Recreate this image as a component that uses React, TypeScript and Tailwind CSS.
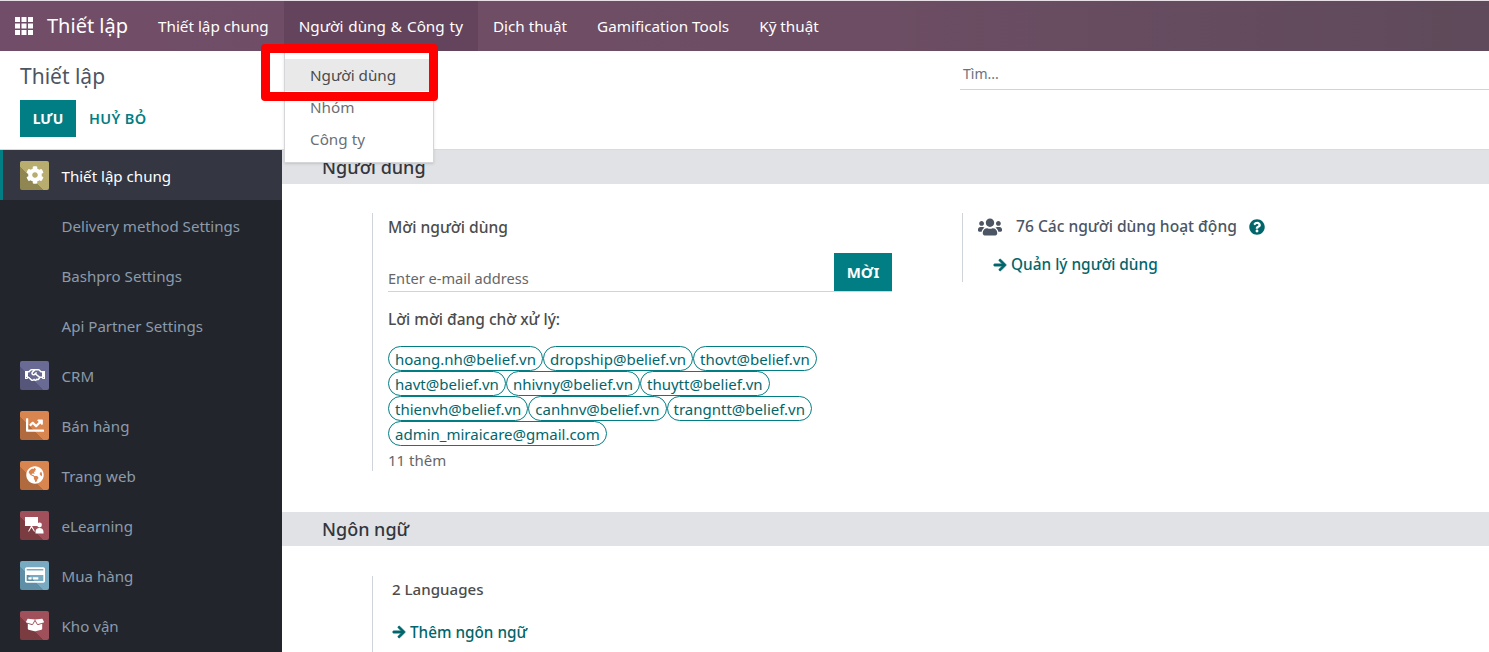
import { FaCog, FaUsers, FaQuestionCircle, FaArrowRight, FaRegHandshake, FaChartLine, FaGlobeAmericas, FaRegCreditCard, FaBoxOpen } from 'react-icons/fa';
import type { ReactNode } from 'react';

const NAV = ['Thiết lập chung', 'Người dùng & Công ty', 'Dịch thuật', 'Gamification Tools', 'Kỹ thuật'];

const EMAILS = [
  ['hoang.nh@belief.vn', 'dropship@belief.vn', 'thovt@belief.vn'],
  ['havt@belief.vn', 'nhivny@belief.vn', 'thuytt@belief.vn'],
  ['thienvh@belief.vn', 'canhnv@belief.vn', 'trangntt@belief.vn'],
  ['admin_miraicare@gmail.com'],
];

const AppsIcon = () => (
  <svg width="18" height="18" viewBox="0 0 18 18" fill="white" className="ml-[15px] shrink-0">
    {[0, 6.5, 13].map((y) =>
      [0, 6.5, 13].map((x) => <rect key={`${x}-${y}`} x={x} y={y} width="5" height="5" />),
    )}
  </svg>
);

const BoardIcon = () => (
  <svg width="21" height="21" viewBox="0 0 21 21" fill="white">
    <rect x="1" y="2" width="13" height="9" />
    <path d="M4 16.5 7 11h1l3 5.5h-1L7.5 12.5 5 16.5z" />
    <circle cx="15.5" cy="10" r="2.4" />
    <path d="M11.5 17c0-2.5 1.6-4 4-4s4 1.500 4 4v1.500h-8z" />
  </svg>
);

const Tile = ({ className, children }: { className: string; children: ReactNode }) => (
  <span className={`flex h-[29px] w-[29px] shrink-0 items-center justify-center rounded-[2px] text-white ${className}`}>{children}</span>
);

const SideItem = ({ label, icon, active }: { label: string; icon?: ReactNode; active?: boolean }) => (
  <div className={`flex h-[50px] items-center ${active ? 'border-l-[3px] border-[#017e84] bg-[#343742] pl-[17px] text-white' : 'pl-5 text-[#8c9bab]'}`}>
    <span className="w-[41.5px] shrink-0">{icon}</span>
    <span className="pt-[2px] text-[15.1px]">{label}</span>
  </div>
);

const SectionTitle = ({ children }: { children: ReactNode }) => (
  <div className="flex h-[34px] items-center bg-[#e1e2e5] pl-10 text-[18px] font-medium text-[#33363d]">{children}</div>
);

const ArrowLink = ({ children }: { children: ReactNode }) => (
  <div className="flex items-center font-medium text-[#01666b]">
    <FaArrowRight size={14} stroke="currentColor" strokeWidth={30} />
    <span className="ml-[4px]">{children}</span>
  </div>
);

export default function App() {
  return (
    <div className="relative h-[652px] w-[1489px] overflow-hidden bg-white font-['Noto_Sans','Open_Sans',sans-serif] text-[15px] text-[#4c4c4c]">
      <header className="flex h-[51px] items-center border-t border-[#e8dfe6] bg-[linear-gradient(90deg,#724d69_0%,#6c4d63_60%,#5e4a5a_100%)] text-white">
        <AppsIcon />
        <span className="ml-[14px] mr-[15px] text-[20px]">Thiết lập</span>
        {NAV.map((item, i) => (
          <span
            key={item}
            className={`flex h-full items-center px-[15px] pt-[1px] text-[15.25px] ${i === 1 ? 'bg-[#64445c] [word-spacing:1px]' : ''}`}
          >
            {item}
          </span>
        ))}
      </header>

      <div className="flex h-[99px] border-b border-[#d8dadd]">
        <div className="w-[282px] pl-5 pt-[11px]">
          <div className="text-[21px] leading-[28px] text-[#4c5564]">Thiết lập</div>
          <div className="mt-[10px] flex items-center">
            <button type="button" className="h-[37px] w-14 bg-[#017e84] text-[14px] font-bold text-white">LƯU</button>
            <button type="button" className="ml-[13px] pt-[1px] text-[14.5px] font-semibold tracking-wide text-[#017e84]">HUỶ BỎ</button>
          </div>
        </div>
        <div className="ml-auto mt-[11px] h-[28px] w-[529px] border-b border-[#ced4da] pl-[3px] text-[14px] leading-[24px] text-[#6b7280]">Tìm...</div>
      </div>

      <div className="flex h-[502px]">
        <aside className="w-[282px] shrink-0 bg-[#22252b]">
          <SideItem active label="Thiết lập chung" icon={<Tile className="bg-[linear-gradient(45deg,#8f8651_0%,#8f8651_40%,#b8ad6e_40%,#b8ad6e_100%)]"><FaCog size={18} /></Tile>} />
          <SideItem label="Delivery method Settings" />
          <SideItem label="Bashpro Settings" />
          <SideItem label="Api Partner Settings" />
          <SideItem label="CRM" icon={<Tile className="bg-[linear-gradient(45deg,#55567a_0%,#55567a_40%,#6a6b94_40%,#6a6b94_100%)]"><FaRegHandshake size={20} /></Tile>} />
          <SideItem label="Bán hàng" icon={<Tile className="bg-[linear-gradient(45deg,#b06a3e_0%,#b06a3e_40%,#d9854f_40%,#d9854f_100%)]"><FaChartLine size={18} /></Tile>} />
          <SideItem label="Trang web" icon={<Tile className="bg-[linear-gradient(45deg,#b06a3e_0%,#b06a3e_40%,#d9854f_40%,#d9854f_100%)]"><FaGlobeAmericas size={18} /></Tile>} />
          <SideItem label="eLearning" icon={<Tile className="bg-[linear-gradient(45deg,#7a3b41_0%,#7a3b41_40%,#a0505a_40%,#a0505a_100%)]"><BoardIcon /></Tile>} />
          <SideItem label="Mua hàng" icon={<Tile className="bg-[linear-gradient(45deg,#5f8fa6_0%,#5f8fa6_40%,#78aac2_40%,#78aac2_100%)]"><FaRegCreditCard size={20} /></Tile>} />
          <SideItem label="Kho vận" icon={<Tile className="bg-[linear-gradient(45deg,#7a3b41_0%,#7a3b41_40%,#a0505a_40%,#a0505a_100%)]"><FaBoxOpen size={18} /></Tile>} />
        </aside>

        <main className="min-w-0 flex-1">
          <SectionTitle>Người dùng</SectionTitle>
          <div className="flex h-[328px] pl-[90px] pt-[29px]">
            <div className="h-[258px] w-[520px] border-l border-[#ced4da] pl-[15px]">
              <div className="text-[15.6px] font-medium leading-[29px]">Mời người dùng</div>
              <div className="mt-3 flex h-[38px] items-end border-b border-[#ced4da]">
                <span className="flex-1 text-[14.6px] leading-[26px] text-[#666]">Enter e-mail address</span>
                <button type="button" className="h-[38px] w-[58px] bg-[#017e84] text-[15px] font-bold text-white">MỜI</button>
              </div>
              <div className="mt-[15px] text-[15.5px] font-medium leading-[24px]">Lời mời đang chờ xử lý:</div>
              <div className="mt-[15px] flex flex-col">
                {EMAILS.map((row) => (
                  <div key={row[0]} className="flex">
                    {row.map((mail) => (
                      <span key={mail} className="h-[25px] rounded-[13px] border border-[#017e84] px-[6px] text-[15px] leading-[24px] text-[#01666b]">{mail}</span>
                    ))}
                  </div>
                ))}
              </div>
              <div className="mt-[2px] text-[15px] leading-[24px] text-[#666]">11 thêm</div>
            </div>
            <div className="ml-[70px] h-[69px] border-l border-[#ced4da] pl-[15px]">
              <div className="flex h-[27px] items-center font-medium">
                <FaUsers size={24} className="text-[#4c5564]" />
                <span className="ml-[14px] text-[15.6px] text-[#4c5564]">76 Các người dùng hoạt động</span>
                <FaQuestionCircle size={16} className="ml-[12px] text-[#01666b]" />
              </div>
              <div className="ml-[15px] mt-[13px] text-[15.4px]">
                <ArrowLink>Quản lý người dùng</ArrowLink>
              </div>
            </div>
          </div>
          <SectionTitle>Ngôn ngữ</SectionTitle>
          <div className="ml-[90px] mt-[30px] h-[76px] border-l border-[#ced4da] pl-[19px]">
            <div className="text-[15.1px] font-medium leading-[27px]">2 Languages</div>
            <div className="mt-[18px] text-[15.3px]">
              <ArrowLink>Thêm ngôn ngữ</ArrowLink>
            </div>
          </div>
        </main>
      </div>

      {/* dropdown */}
      <div className="absolute left-[284px] top-[51px] h-[112px] w-[150px] border border-t-0 border-[#d4d6d9] bg-white pt-2 shadow-sm">
        {['Người dùng', 'Nhóm', 'Công ty'].map((item, i) => (
          <div key={item} className={`flex h-8 items-center pl-[25px] text-[15.25px] ${i === 0 ? 'bg-[#e9e9e9] text-[#4c4c4c]' : 'text-[#6b6f76]'}`}>{item}</div>
        ))}
      </div>
      {/* red highlight */}
      <div className="absolute left-[261px] top-[44px] h-[57px] w-[177px] rounded-[4px] border-[9px] border-[#ff0000]" />
    </div>
  );
}
